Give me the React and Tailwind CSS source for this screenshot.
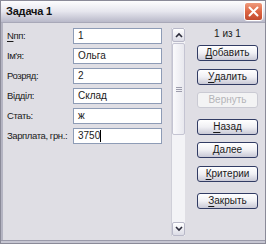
import React from 'react';

const fields = [
    { label: 'Nпп:', hot: 0, value: '1' },
    { label: "Ім'я:", value: 'Ольга' },
    { label: 'Розряд:', value: '2' },
    { label: 'Відділ:', value: 'Склад' },
    { label: 'Стать:', value: 'ж' },
    { label: 'Зарплата, грн.:', value: '3750', caret: true },
];

const Hot = ({ text, hot }) => {
    if (hot === undefined) return text;
    return (
        <>
            {text.slice(0, hot)}
            <span className="underline underline-offset-[2px]">{text[hot]}</span>
            {text.slice(hot + 1)}
        </>
    );
};

const Button = ({ text, hot, disabled, className = '' }) => (
    <div
        className={`h-[16px] w-[61px] flex items-center justify-center rounded-[3px] border text-[10px] leading-none ${
            disabled
                ? 'border-[#cacad3] bg-[#f3f3f4] text-[#b4b4b8]'
                : 'border-[#323c64] bg-gradient-to-b from-white via-[#f0f0f4] to-[#c9c9d6] text-[#1a1a1a]'
        } ${className}`}
    >
        <Hot text={text} hot={hot} />
    </div>
);

const Chevron = ({ up }) => (
    <svg width="8" height="6" viewBox="0 0 8 6">
        <path
            d={up ? 'M1 5 L4 2 L7 5' : 'M1 1 L4 4 L7 1'}
            fill="none"
            stroke="#2b2b3a"
            strokeWidth="1.6"
        />
    </svg>
);

export default function App() {
    return (
        <div
            className="w-[266px] h-[244px] flex flex-col bg-[#dfdee4] border border-[#8a8a98] text-[#1a1a1a]"
            style={{ fontFamily: '"Liberation Sans", Arial, sans-serif' }}
        >
            {/* title bar */}
            <div className="h-[22px] shrink-0 flex items-center justify-between pl-[5px] pr-[2px] bg-gradient-to-b from-[#fdfdfe] via-[#e6e6ee] to-[#b9b9c9] border-b border-[#a8a8b8]">
                <span className="text-[11px] font-bold text-[#111] tracking-[-0.2px]">Задача 1</span>
                <div className="w-[19px] h-[19px] rounded-[3px] border border-white bg-gradient-to-b from-[#ef9a7c] via-[#dd6644] to-[#c24a2e] flex items-center justify-center">
                    <svg width="11" height="11" viewBox="0 0 11 11">
                        <path d="M1.5 1.5 L9.5 9.5 M9.5 1.5 L1.5 9.5" stroke="white" strokeWidth="2" strokeLinecap="round" />
                    </svg>
                </div>
            </div>

            {/* body */}
            <div className="flex-1 flex border-l-[2px] border-[#b4b4c2] pt-[5px] pb-[4px]">
                <div className="flex flex-col gap-[4px] pl-[4px] w-[160px]">
                    {fields.map((f) => (
                        <div key={f.label} className="flex items-center h-[16px]">
                            <span className="w-[66px] text-[9.5px] tracking-[-0.4px] leading-none whitespace-nowrap">
                                <Hot text={f.label} hot={f.hot} />
                            </span>
                            <div className="w-[89px] h-[16px] bg-white border border-[#8e9cb6] flex items-center pl-[4px] text-[10px] leading-none">
                                {f.value}
                                {f.caret && <span className="inline-block w-[1px] h-[12px] bg-black" />}
                            </div>
                        </div>
                    ))}
                </div>

                {/* scrollbar */}
                <div className="ml-[8px] w-[14px] flex flex-col bg-[#f3f3f6] border-l border-[#cfcfd8]">
                    <div className="h-[14px] flex items-center justify-center rounded-[2px] border border-[#b8b8c8] bg-gradient-to-b from-white to-[#dcdce6]">
                        <Chevron up />
                    </div>
                    <div className="h-[92px] mt-[1px] rounded-[2px] border border-[#c4c4d2] bg-gradient-to-r from-[#fafafc] to-[#e8e8ee] flex items-center justify-center">
                        <div className="flex flex-col gap-[1px]">
                            <div className="w-[6px] h-[1px] bg-[#9c9cac]" />
                            <div className="w-[6px] h-[1px] bg-[#9c9cac]" />
                            <div className="w-[6px] h-[1px] bg-[#9c9cac]" />
                        </div>
                    </div>
                    <div className="flex-1" />
                    <div className="h-[14px] flex items-center justify-center rounded-[2px] border border-[#b8b8c8] bg-gradient-to-b from-white to-[#dcdce6]">
                        <Chevron />
                    </div>
                </div>

                {/* buttons */}
                <div className="ml-[12px] flex flex-col">
                    <div className="h-[12px] flex items-center justify-center text-[10px] leading-none">1 из 1</div>
                    <Button text="Добавить" hot={0} className="mt-[5px]" />
                    <Button text="Удалить" hot={0} className="mt-[8px]" />
                    <Button text="Вернуть" disabled className="mt-[7px]" />
                    <Button text="Назад" hot={0} className="mt-[11px]" />
                    <Button text="Далее" className="mt-[7px]" />
                    <Button text="Критерии" hot={0} className="mt-[8px]" />
                    <Button text="Закрыть" hot={0} className="mt-[11px]" />
                </div>
            </div>
            <div className="h-[3px] shrink-0 bg-[#c6c6d2] border-t border-[#9a9aaa]" />
        </div>
    );
}
